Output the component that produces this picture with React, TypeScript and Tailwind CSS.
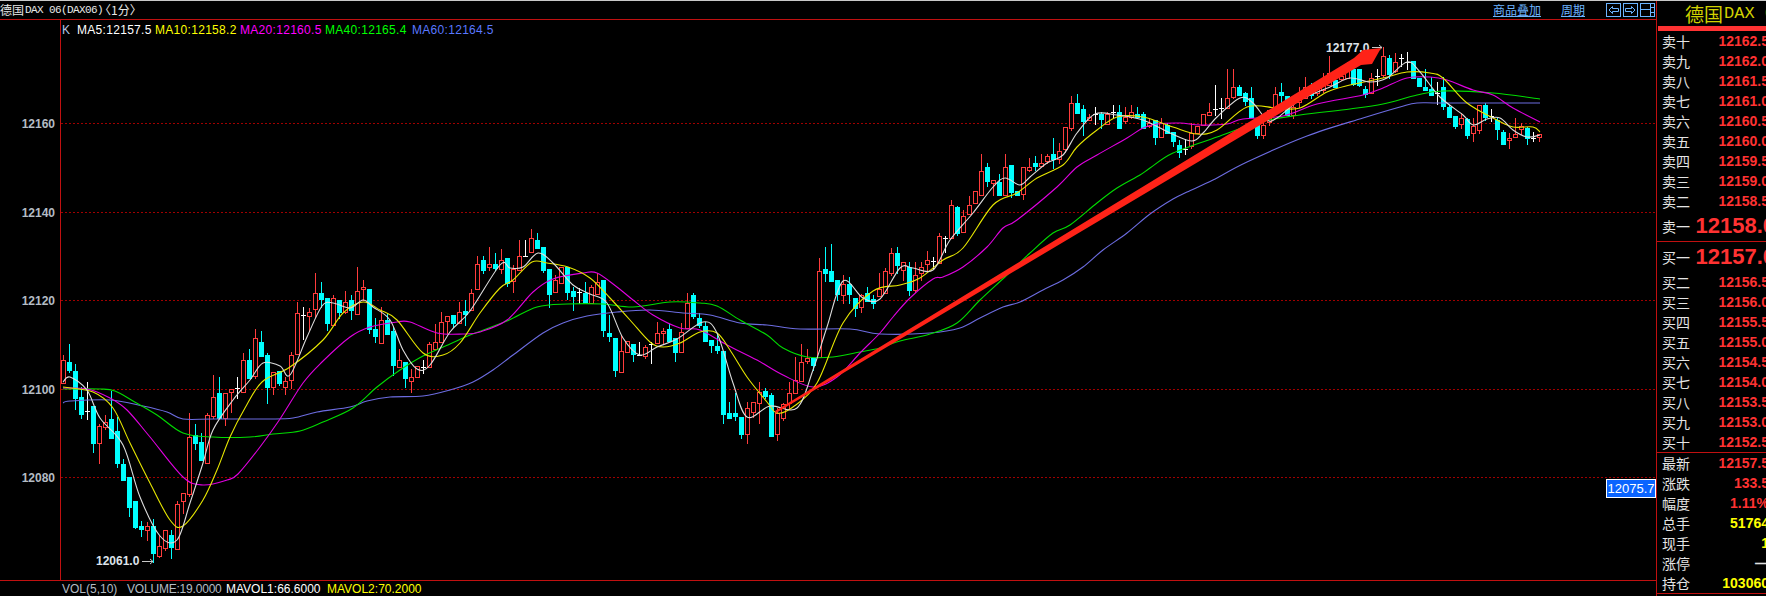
// 1-minute candlestick chart with a level-10 quote panel

type Candle = [kind: "r" | "c" | "w", top: number, bottom: number, high: number, low: number];

const firstCandleX = 63;
const candleStep = 6;

// pixel rows taken from the chart, one candle per entry
const candles: Candle[] = [
  ["r",360,383,355,383],["c",362,370,344,372],["c",371,398,364,409],["c",397,414,387,418],["w",411,411,382,419],
  ["c",406,443,406,452],["r",426,443,424,463],["r",422,427,415,429],["c",419,438,391,438],["c",431,463,417,467],
  ["c",464,480,459,480],["c",477,507,477,516],["c",501,527,501,528],["c",526,529,521,536],["r",526,530,522,540],
  ["c",526,553,519,562],["r",546,556,536,557],["r",530,548,530,550],["c",535,547,530,558],["r",504,549,501,549],
  ["r",493,501,493,513],["r",437,494,413,496],["c",435,443,424,449],["c",442,460,433,460],["r",415,463,413,463],
  ["r",397,416,375,418],["c",393,418,377,418],["r",393,418,393,425],["r",389,392,389,412],["w",388,388,377,398],
  ["r",360,392,353,392],["c",360,378,349,378],["r",338,376,329,378],["c",342,356,331,356],["c",355,387,353,403],
  ["r",372,387,372,394],["c",371,383,371,385],["r",381,387,377,394],["r",355,380,352,388],["r",313,354,302,354],
  ["w",315,315,307,339],["r",312,316,308,330],["r",293,309,273,317],["c",293,299,282,307],["c",298,323,298,330],
  ["r",298,325,295,325],["c",300,312,300,318],["r",302,312,291,313],["c",300,310,295,319],["r",291,314,267,314],
  ["r",287,289,280,300],["c",289,329,289,333],["c",329,336,318,342],["r",320,343,307,343],["c",320,334,313,334],
  ["c",331,365,327,375],["r",360,367,349,367],["c",362,378,362,387],["r",377,381,369,392],["r",366,377,366,377],
  ["w",367,367,360,373],["r",344,367,342,367],["r",342,349,324,349],["r",322,342,312,342],["r",316,321,316,333],
  ["c",315,323,315,327],["r",312,323,302,323],["c",311,314,300,325],["r",293,310,289,310],["r",264,289,256,289],
  ["c",260,270,256,273],["r",264,267,247,270],["c",264,268,253,270],["r",260,269,249,273],["c",258,283,258,286],
  ["r",269,281,265,292],["r",256,270,240,270],["w",256,256,240,256],["r",238,252,229,252],["c",240,248,233,248],
  ["c",247,270,247,272],["c",269,294,269,307],["r",280,292,275,292],["r",267,283,267,283],["c",267,292,267,299],
  ["c",291,296,287,310],["w",292,292,288,303],["c",293,303,282,303],["r",287,303,285,303],["r",282,294,273,294],
  ["c",280,330,280,336],["c",333,336,315,341],["c",338,370,338,376],["r",351,372,335,372],["r",341,352,341,352],
  ["c",344,354,344,361],["w",355,355,342,355],["r",347,356,345,358],["w",344,344,342,363],["r",333,343,322,343],
  ["r",331,333,328,343],["c",329,341,324,341],["c",338,352,338,361],["r",332,352,323,352],["r",303,328,293,328],
  ["c",295,316,293,318],["c",318,325,313,327],["c",326,341,322,341],["c",340,345,340,352],["c",346,350,333,353],
  ["c",351,414,351,423],["c",413,418,402,418],["c",413,416,393,420],["c",417,434,417,438],["r",408,434,402,443],
  ["r",402,412,402,417],["r",392,403,382,423],["c",391,396,388,398],["c",395,436,393,436],["r",413,434,408,440],
  ["r",404,418,403,420],["r",393,403,382,408],["r",380,393,357,393],["r",362,381,344,381],["r",358,361,349,363],
  ["c",358,365,358,370],["r",271,357,258,357],["c",269,273,247,281],["c",271,281,244,281],["c",280,294,280,300],
  ["r",284,295,275,303],["c",284,294,277,303],["c",298,308,298,316],["r",295,307,294,312],["c",293,301,287,301],
  ["c",299,303,295,308],["r",289,296,273,296],["r",271,293,268,293],["r",253,273,248,275],["c",253,265,247,273],
  ["r",262,270,262,280],["c",267,290,262,295],["r",275,290,262,292],["r",267,273,262,280],["r",260,264,251,270],
  ["w",261,261,257,268],["r",236,263,233,263],["w",238,238,236,252],["r",205,238,200,238],["c",207,233,206,235],
  ["r",216,232,210,232],["r",205,214,196,214],["r",191,203,191,203],["r",171,195,154,195],["c",167,181,163,186],
  ["r",180,183,180,195],["c",182,195,174,195],["r",167,195,154,195],["c",165,192,165,197],["c",191,195,191,195],
  ["r",167,194,167,199],["r",167,170,158,171],["c",163,166,156,170],["r",163,166,154,166],["r",156,161,154,163],
  ["c",154,159,138,168],["r",151,159,143,163],["r",127,149,127,152],["r",103,128,96,130],["c",103,113,94,113],
  ["c",109,121,105,135],["r",117,120,114,120],["w",114,114,107,124],["c",114,119,112,128],["r",114,124,112,124],
  ["w",112,112,105,117],["c",112,128,105,128],["r",117,121,107,123],["r",112,117,105,118],["c",114,117,107,118],
  ["c",114,128,112,128],["r",123,126,119,127],["c",120,137,120,144],["r",123,137,118,137],["c",125,133,123,133],
  ["c",132,141,132,146],["c",145,152,140,157],["w",149,149,139,154],["r",133,146,123,148],["r",126,133,126,133],
  ["r",114,125,114,125],["r",112,115,103,115],["w",109,109,85,115],["w",108,108,98,118],["r",98,108,69,108],
  ["r",87,97,69,98],["c",87,95,85,95],["c",93,101,92,105],["c",98,117,87,117],["c",125,135,117,138],
  ["r",125,135,120,138],["r",110,122,110,125],["r",94,107,87,110],["c",92,95,83,102],["c",96,115,96,115],
  ["r",107,115,98,118],["r",95,102,87,107],["r",87,98,77,98],["c",90,95,83,98],["r",88,93,82,95],
  ["r",85,90,73,92],["r",73,85,56,85],["c",80,87,70,87],["r",76,79,67,80],["r",70,78,62,78],
  ["c",69,84,69,85],["c",69,85,69,86],["c",89,94,86,97],["r",78,93,73,93],["w",76,76,69,85],
  ["r",56,75,47,77],["c",58,74,55,78],["r",62,71,53,72],["w",58,58,54,66],["w",62,62,52,69],
  ["c",61,78,61,78],["c",78,86,78,86],["c",87,90,69,90],["c",89,95,77,95],["w",93,93,82,104],
  ["c",87,106,77,109],["c",107,117,105,117],["c",116,126,116,128],["r",118,124,113,128],["c",119,135,118,138],
  ["r",126,133,118,141],["r",105,130,105,133],["c",105,117,103,120],["w",116,116,109,121],["c",120,129,118,139],
  ["c",132,144,130,144],["r",138,140,133,148],["r",134,137,118,137],["r",126,129,123,134],["c",128,138,127,144],
  ["w",138,138,132,141],["r",134,137,134,141],
];

type Point = [number, number];

const ma60: Point[] = [[63,403],[70,401],[110,400],[143,406],[167,412],[183,419],[213,419],[267,419],[293,418],[317,412],[350,407],[367,401],[390,397],[423,396],[450,390],[473,382],[493,370],[513,355],[543,333],[563,323],[587,316],[617,312],[650,310],[683,313],[710,315],[740,323],[767,325],[800,329],[850,329],[880,334],[930,333],[960,328],[980,318],[1003,307],[1020,302],[1043,290],[1063,280],[1083,267],[1103,250],[1127,233],[1150,214],[1173,199],[1187,192],[1213,180],[1247,162],[1307,136],[1363,118],[1400,107],[1417,103],[1443,103],[1540,103]];
const ma40: Point[] = [[63,389],[100,389],[115,391],[133,401],[157,415],[183,433],[213,437],[250,437],[273,434],[300,431],[323,422],[353,408],[377,387],[400,370],[423,356],[450,344],[470,335],[507,321],[537,307],[567,304],[603,304],[633,307],[670,302],[700,303],[717,306],[740,320],[767,335],[783,348],[807,357],[833,357],[860,352],[880,348],[900,341],[930,334],[957,323],[980,300],[1007,275],[1030,253],[1053,233],[1070,225],[1097,203],[1117,188],[1140,175],[1150,168],[1173,153],[1217,137],[1260,122],[1300,115],[1350,109],[1383,104],[1417,95],[1443,91],[1493,93],[1540,99]];
const ma20: Point[] = [[63,388],[87,389],[110,398],[127,410],[150,437],[183,477],[203,485],[227,480],[238,474],[260,447],[280,419],[303,383],[322,362],[350,337],[370,327],[397,322],[410,322],[437,333],[463,334],[480,332],[507,320],[533,292],[553,279],[583,273],[597,273],[617,287],[633,300],[653,315],[680,328],[700,330],[727,345],[757,360],[783,375],[813,387],[837,377],[860,353],[880,333],[893,317],[910,298],[933,279],[943,277],[963,267],[987,247],[1003,228],[1017,220],[1057,187],[1077,167],[1097,155],[1127,138],[1143,128],[1157,124],[1180,123],[1200,125],[1227,124],[1243,119],[1283,116],[1317,104],[1363,95],[1383,88],[1407,78],[1430,77],[1447,80],[1473,90],[1493,95],[1513,108],[1540,122]];
const ma10: Point[] = [[63,387],[93,392],[113,408],[130,443],[150,483],[170,520],[183,526],[203,500],[217,470],[230,437],[245,408],[262,382],[290,367],[323,340],[343,313],[363,302],[380,310],[397,320],[423,353],[443,355],[460,343],[480,313],[500,288],[513,280],[532,262],[547,263],[568,267],[590,278],[610,298],[630,320],[650,342],[663,347],[680,343],[700,332],[717,333],[730,350],[747,377],[767,402],[777,413],[793,407],[817,383],[843,323],[873,291],[900,285],[920,278],[943,260],[963,248],[993,205],[1017,193],[1037,178],[1063,165],[1077,147],[1097,130],[1117,117],[1143,117],[1173,127],[1197,134],[1217,130],[1247,107],[1277,108],[1300,108],[1327,92],[1350,85],[1383,78],[1407,72],[1430,73],[1443,78],[1467,103],[1497,120],[1513,127],[1533,127],[1540,132]];
const ma5: Point[] = [[63,382],[70,377],[87,390],[100,418],[123,445],[140,497],[160,536],[177,540],[190,503],[203,463],[213,430],[233,400],[250,380],[263,363],[280,366],[290,375],[307,337],[322,306],[333,303],[350,308],[363,300],[373,307],[390,320],[403,350],[417,369],[430,365],[450,332],[470,311],[500,265],[510,268],[523,267],[538,253],[553,263],[573,285],[590,294],[607,303],[623,338],[640,355],[657,347],[677,339],[703,322],[717,333],[733,383],[747,417],[770,406],[797,408],[813,370],[827,327],[843,281],[863,298],[880,299],[900,268],[913,268],[933,270],[950,240],[973,213],[993,187],[1005,178],[1020,185],[1030,177],[1047,163],[1063,155],[1077,133],[1095,114],[1117,115],[1143,120],[1170,133],[1192,141],[1203,133],[1217,117],[1240,98],[1253,103],[1267,120],[1277,118],[1300,100],[1330,87],[1350,78],[1370,82],[1387,78],[1407,62],[1420,72],[1440,97],[1463,115],[1473,125],[1487,119],[1500,118],[1513,130],[1527,137],[1540,135]];

const maLines = [
  { points: ma60, color: "#6c6ce0" },
  { points: ma40, color: "#00dc00" },
  { points: ma20, color: "#e000e0" },
  { points: ma10, color: "#e6e600" },
  { points: ma5, color: "#dcdcdc" },
];

const axisLevels = [
  { label: "12160", y: 123 },
  { label: "12140", y: 212 },
  { label: "12120", y: 300 },
  { label: "12100", y: 389 },
  { label: "12080", y: 477 },
];

const legend = [
  { text: "MA5:12157.5", color: "text-white", w: "w-[78px]" },
  { text: "MA10:12158.2", color: "text-[#ffff00]", w: "w-[85px]" },
  { text: "MA20:12160.5", color: "text-[#ff00ff]", w: "w-[85px]" },
  { text: "MA40:12165.4", color: "text-[#00ff00]", w: "w-[87px]" },
  { text: "MA60:12164.5", color: "text-[#5a78ff]", w: "w-[85px]" },
];

const asks = [
  ["卖十", "12162.5"], ["卖九", "12162.0"], ["卖八", "12161.5"], ["卖七", "12161.0"], ["卖六", "12160.5"],
  ["卖五", "12160.0"], ["卖四", "12159.5"], ["卖三", "12159.0"], ["卖二", "12158.5"],
];
const bids = [
  ["买二", "12156.5"], ["买三", "12156.0"], ["买四", "12155.5"], ["买五", "12155.0"], ["买六", "12154.5"],
  ["买七", "12154.0"], ["买八", "12153.5"], ["买九", "12153.0"], ["买十", "12152.5"],
];
const stats = [
  ["最新", "12157.5", "text-[#ff3232]"],
  ["涨跌", "133.5", "text-[#ff3232]"],
  ["幅度", "1.11%", "text-[#ff3232]"],
  ["总手", "51764", "text-[#ffff00]"],
  ["现手", "1", "text-[#ffff00]"],
  ["涨停", "—", "text-[#e0e0e0]"],
  ["持仓", "103060", "text-[#ffff00]"],
];

const cjk = "font-['Noto_Sans_CJK_SC',sans-serif]";
const sans = "font-['Liberation_Sans','Noto_Sans_CJK_SC',sans-serif]";
const mono = "font-['Liberation_Mono',monospace]";

// catmull-rom through the sampled points, so the averages read as smooth curves
function smoothPath(p: Point[]) {
  let d = `M${p[0][0]} ${p[0][1]}`;
  for (let i = 0; i < p.length - 1; i++) {
    const a = p[Math.max(i - 1, 0)];
    const b = p[i];
    const c = p[i + 1];
    const e = p[Math.min(i + 2, p.length - 1)];
    const c1x = b[0] + (c[0] - a[0]) / 6;
    const c1y = b[1] + (c[1] - a[1]) / 6;
    const c2x = c[0] - (e[0] - b[0]) / 6;
    const c2y = c[1] - (e[1] - b[1]) / 6;
    d += ` C${c1x} ${c1y} ${c2x} ${c2y} ${c[0]} ${c[1]}`;
  }
  return d;
}

function CandleMark({ candle, index }: { candle: Candle; index: number }) {
  const [kind, top, bottom, high, low] = candle;
  const cx = firstCandleX + index * candleStep;
  const color = kind === "r" ? "#ff3c3c" : kind === "c" ? "#00ffff" : "#ffffff";
  return (
    <g shapeRendering="crispEdges">
      <rect x={cx} y={high} width={1} height={low - high + 1} fill={color} />
      {kind === "c" && <rect x={cx - 2} y={top} width={5} height={bottom - top + 1} fill={color} />}
      {kind === "w" && <rect x={cx - 2} y={top} width={5} height={1} fill={color} />}
      {kind === "r" && (
        <rect x={cx - 1.5} y={top + 0.5} width={4} height={bottom - top} fill="#000" stroke={color} />
      )}
    </g>
  );
}

function Chart() {
  return (
    <svg width={1656} height={560} viewBox="0 20 1656 560" className="block">
      <rect x={60} y={20} width={1} height={560} fill="#c01010" />
      {axisLevels.map((level) => (
        <g key={level.label}>
          <line x1={61} x2={1656} y1={level.y + 0.5} y2={level.y + 0.5} stroke="#a00000" strokeDasharray="2 2" />
          <text x={55} y={level.y + 5} textAnchor="end" fill="#b4bcc4" fontSize={12} fontWeight={700} fontFamily="'Liberation Sans',sans-serif">
            {level.label}
          </text>
        </g>
      ))}
      {candles.map((candle, i) => (
        <CandleMark key={i} candle={candle} index={i} />
      ))}
      {maLines.map((line) => (
        <path key={line.color} d={smoothPath(line.points)} fill="none" stroke={line.color} strokeWidth={1.1} />
      ))}

      {/* high / low markers */}
      <text x={96} y={565} fill="#dde3ea" fontSize={12} fontWeight={700} fontFamily="'Liberation Sans',sans-serif">12061.0</text>
      <path d="M142 561.5H153M150 559l3 2.5-3 2.5" fill="none" stroke="#c8c8c8" />
      <text x={1326} y={52} fill="#dde3ea" fontSize={12} fontWeight={700} fontFamily="'Liberation Sans',sans-serif">12177.0</text>
      <path d="M1372 47.5H1382M1379 45l3 2.5-3 2.5" fill="none" stroke="#c8c8c8" />

      {/* hand-drawn trend arrow */}
      <polygon points="775,411 1354,58 1363,50 1381,48 1372,64 1361,65 776,413" fill="#ff2318" />
    </svg>
  );
}

function QuoteRow({ label, value, color }: { label: string; value: string; color: string }) {
  return (
    <div className="flex h-5 w-[112px] items-center justify-between pl-[5px]">
      <span className={`${cjk} text-[14px] leading-none text-[#e4e4e4]`}>{label}</span>
      <span className={`${sans} text-[14px] font-bold leading-none ${color}`}>{value}</span>
    </div>
  );
}

function BestRow({ label, value }: { label: string; value: string }) {
  return (
    <div className="flex h-[30px] w-[118px] items-center justify-between pl-[5px]">
      <span className={`${cjk} text-[14px] leading-none text-[#e4e4e4]`}>{label}</span>
      <span className={`${sans} text-[22px] font-bold leading-none text-[#ff3232]`}>{value}</span>
    </div>
  );
}

export default function App() {
  return (
    <div className="flex h-[596px] w-[1766px] overflow-hidden border-t border-[#c8c8c8] bg-black">
      {/* Chart column */}
      <div className="flex w-[1656px] shrink-0 flex-col">
        <div className="flex h-[19px] shrink-0 items-center border-b border-[#c01010] text-[#e8e8e8]">
          <span className={`${cjk} text-[12px] leading-none`}>德国</span>
          <span className={`${mono} ml-px w-[36px] whitespace-pre text-[11px] leading-none tracking-[-0.6px]`}>DAX 06</span>
          <span className={`${mono} w-[42px] text-[11px] leading-none tracking-[-0.6px]`}>(DAX06)</span>
          <span className={`${cjk} text-[12px] leading-none -ml-[4px]`}>〈1分〉</span>
          <div className="ml-auto flex items-center text-[#6cb4ff]">
            <span className={`${cjk} text-[12px] leading-none underline`}>商品叠加</span>
            <span className={`${cjk} ml-5 text-[12px] leading-none underline`}>周期</span>
            <div className="ml-[21px] flex gap-[2px] pr-px">
              <button className="flex h-[14px] w-[15px] items-center justify-center border border-[#6cb4ff]">
                <svg width="11" height="8" viewBox="0 0 11 8" fill="none" stroke="#6cb4ff">
                  <path d="M4.5.5 1 4l3.5 3.5V5.5h6v-3h-6z" />
                </svg>
              </button>
              <button className="flex h-[14px] w-[15px] items-center justify-center border border-[#6cb4ff]">
                <svg width="11" height="8" viewBox="0 0 11 8" fill="none" stroke="#6cb4ff">
                  <path d="M6.5.5 10 4 6.5 7.5V5.5h-6v-3h6z" />
                </svg>
              </button>
              <button className="flex h-[14px] w-[15px] items-center justify-center border border-[#6cb4ff]">
                <svg width="13" height="12" viewBox="0 0 13 12" fill="none" stroke="#6cb4ff">
                  <path d="M0 5.5h9M9.5 0v12M10 3.5h3M10 8.5h3" />
                </svg>
              </button>
            </div>
          </div>
        </div>

        <div className="relative h-[560px] shrink-0">
          <Chart />
          {/* legend and current-price tag sit over the chart */}
          <div className={`${sans} absolute left-[62px] top-[3px] flex items-center text-[12px] leading-[14px] tracking-[0.3px]`}>
            <span className="w-[15px] text-[#b4c8e6]">K</span>
            {legend.map((item) => (
              <span key={item.text} className={`${item.w} ${item.color}`}>{item.text}</span>
            ))}
          </div>
          <div className={`${sans} absolute right-0 top-[459px] flex h-[19px] w-[50px] items-center justify-center border border-white bg-[#0a64ff] text-[13px] leading-none text-white`}>
            12075.7
          </div>
        </div>

        <div className={`${sans} flex h-[16px] shrink-0 overflow-hidden border-t border-[#c01010] text-[12px] leading-[14px]`}>
          <span className="mt-[13px] w-[56px] pr-px text-right text-[#b4bcc4]">200</span>
          <div className="ml-[6px] flex pt-[1px]">
            <span className="w-[65px] text-[#b4bcc4]">VOL(5,10)</span>
            <span className="w-[99px] tracking-[-0.2px] text-[#b4bcc4]">VOLUME:19.0000</span>
            <span className="w-[101px] text-white">MAVOL1:66.6000</span>
            <span className="text-[#ffff00]">MAVOL2:70.2000</span>
          </div>
        </div>
      </div>

      {/* Quote panel */}
      <div className="flex w-[110px] shrink-0 flex-col overflow-hidden border-l border-[#c01010]">
        <div className="flex h-[25px] shrink-0 items-center whitespace-pre pl-[28px] text-[#d2d200]">
          <span className={`${cjk} text-[19px] leading-none`}>德国</span>
          <span className={`${mono} ml-px text-[17px] leading-none`}>DAX 06</span>
        </div>
        <div className="ml-px h-[5px] shrink-0 bg-[#ff3232]" />
        {asks.map(([label, value]) => (
          <QuoteRow key={label} label={label} value={value} color="text-[#ff3232]" />
        ))}
        <BestRow label="卖一" value="12158.0" />
        <div className="h-px shrink-0 bg-[#c01010]" />
        <BestRow label="买一" value="12157.0" />
        {bids.map(([label, value]) => (
          <QuoteRow key={label} label={label} value={value} color="text-[#ff3232]" />
        ))}
        <div className="h-px shrink-0 bg-[#c01010]" />
        {stats.map(([label, value, color]) => (
          <QuoteRow key={label} label={label} value={value} color={color} />
        ))}
        <div className="h-px shrink-0 bg-[#c01010]" />
      </div>
    </div>
  );
}
